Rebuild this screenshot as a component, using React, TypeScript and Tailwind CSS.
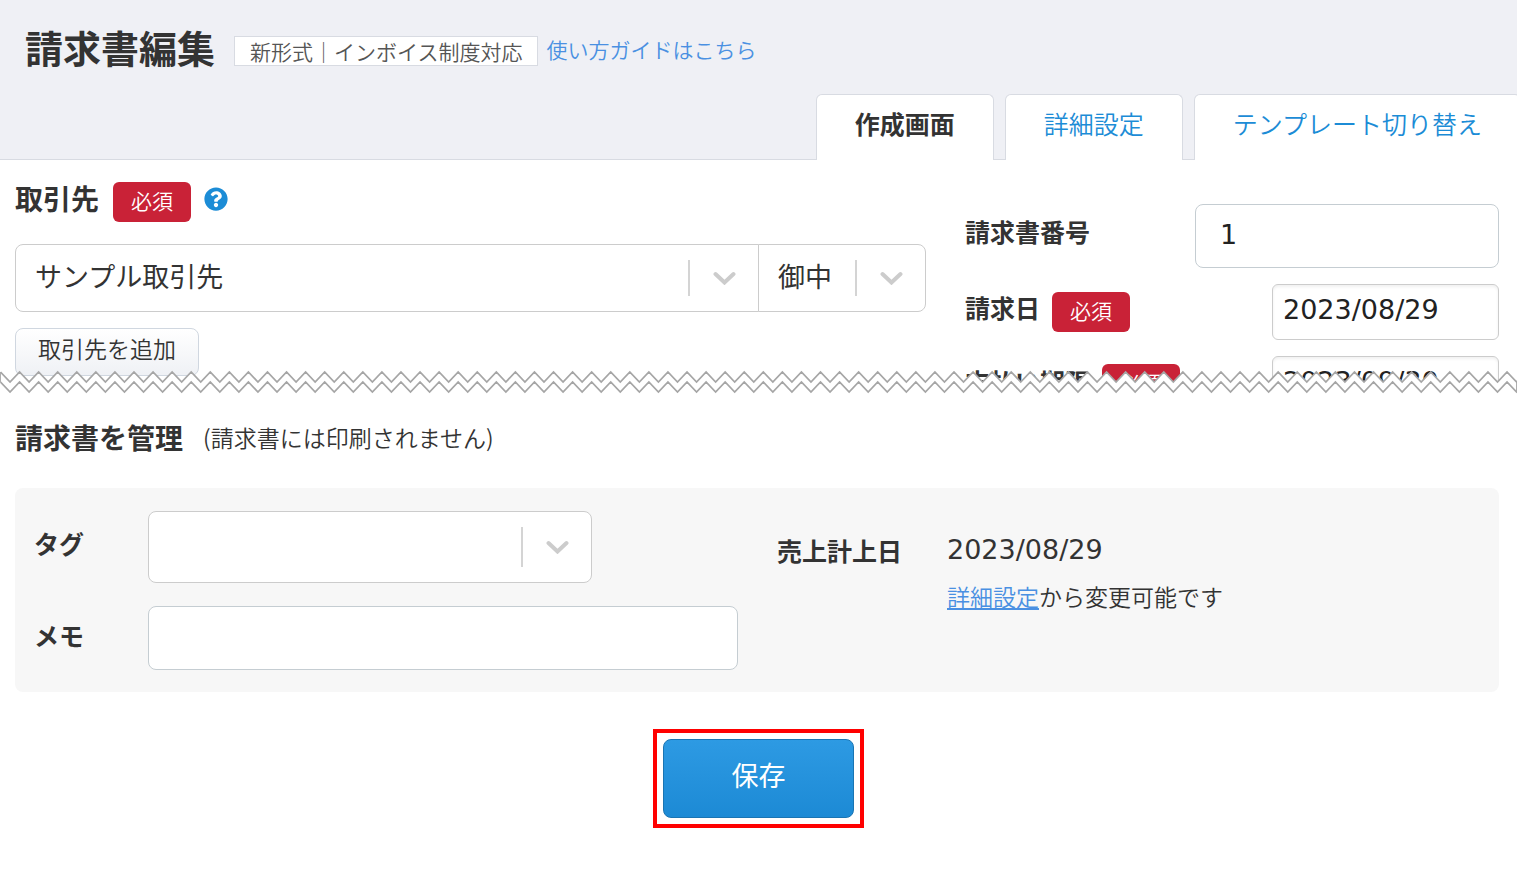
import React from "react";
import { FaQuestionCircle } from "react-icons/fa";

const TOOTH = 19.07;

const zigzag = (top: number, bottom: number) => {
  const points: string[] = [];
  for (let i = 0; i <= 300; i++) {
    points.push(`${(i * TOOTH) / 2 + 0.5},${i % 2 === 0 ? top : bottom}`);
  }
  return points;
};

const upper = zigzag(3, 13);
const lower = zigzag(13, 23);

const TornEdge = () => (
  <svg className="relative -mt-3 block h-[26px] w-full" aria-hidden="true">
    <polygon points={[...upper, ...[...lower].reverse()].join(" ")} fill="#fff" />
    <g fill="none" stroke="#a6a6a6" strokeWidth="1.8">
      <polyline points={upper.join(" ")} />
      <polyline points={lower.join(" ")} />
      <line x1="0" y1="3" x2="0" y2="13" />
      <line x1="100%" y1="13" x2="100%" y2="22" />
    </g>
  </svg>
);

const Required = () => (
  <span className="flex h-10 items-center rounded-md bg-[#c92237] px-[18px] pb-1 text-[21px] leading-none font-[350] text-white">
    必須
  </span>
);

type SelectBoxProps = {
  id: string;
  label?: string;
  options: string[];
  className: string;
  selectClassName: string;
};

const SelectBox = ({ id, label, options, className, selectClassName }: SelectBoxProps) => (
  <div className={`relative ${className}`}>
    <select
      id={id}
      aria-label={label}
      className={`w-full appearance-none border border-[#ccc] bg-white pr-[72px] pb-1 pl-[19px] text-[27px] text-[#333] ${selectClassName}`}
    >
      {options.map((option) => (
        <option key={option}>{option}</option>
      ))}
    </select>
    <div className="pointer-events-none absolute inset-y-4 right-0 flex w-[71px] items-center justify-center border-l-2 border-[#d4d4d4]">
      <svg width="24" height="14" viewBox="0 0 24 14" fill="none" stroke="#ccc" strokeWidth="4" strokeLinecap="round">
        <path d="M2.5 3 L11.5 11.5 L20.5 3" />
      </svg>
    </div>
  </div>
);

const tabClass =
  "flex h-[66px] shrink-0 items-center rounded-t-md border border-b-0 border-[#d8dbe2] bg-white px-[38px] pb-2 text-[25px] whitespace-nowrap";

const Header = () => (
  <header className="overflow-hidden bg-[#eff0f5]">
    <div className="flex items-center pt-6 pl-[25px]">
      <h1 className="pb-1 text-[38px] leading-[46px] font-bold">請求書編集</h1>
      <span className="mt-1 ml-[19px] border border-[#d8dbe2] bg-white px-[15px] text-[21px] leading-7 font-[350] text-[#555]">
        新形式｜インボイス制度対応
      </span>
      <a href="#guide" className="ml-2 text-[21px] leading-7 font-[350] text-[#4a90e2]">
        使い方ガイドはこちら
      </a>
    </div>
    <nav className="mt-5 flex justify-end">
      <div className="flex-1 border-b border-[#d8dbe2]" />
      <a href="#edit" className={`${tabClass} font-bold`}>作成画面</a>
      <div className="w-[11px] border-b border-[#d8dbe2]" />
      <a href="#detail" className={`${tabClass} font-[350] text-[#1c8cd6]`}>詳細設定</a>
      <div className="w-[11px] border-b border-[#d8dbe2]" />
      <a href="#template" className={`${tabClass} -mr-1 font-[350] text-[#1c8cd6]`}>テンプレート切り替え</a>
    </nav>
  </header>
);

const dateInput =
  "ml-auto h-14 w-[227px] rounded-md border border-[#ccc] bg-white px-2.5 pb-1.5 font-['DejaVu_Sans',sans-serif] text-[27px] text-[#222] shadow-[inset_0_2px_3px_rgba(0,0,0,0.06)]";

const InvoiceForm = () => (
  <section className="flex h-[221px] items-start gap-[39px] overflow-hidden pr-[18px] pl-[15px]">

    {/* Customer */}
    <div className="flex-1 pt-[22px]">
      <div className="flex h-10 items-center">
        <label htmlFor="client" className="mr-3.5 pb-2 text-[28px] leading-9 font-bold">取引先</label>
        <Required />
        <button type="button" aria-label="ヘルプ" className="ml-[13px] pb-1.5 text-[#1c8cd6]">
          <FaQuestionCircle size={24} />
        </button>
      </div>
      <div className="mt-[22px] flex">
        <SelectBox
          id="client"
          options={["サンプル取引先"]}
          className="flex-1"
          selectClassName="h-[68px] rounded-l-lg"
        />
        <SelectBox
          id="honorific"
          label="敬称"
          options={["御中", "様"]}
          className="-ml-px w-[168px]"
          selectClassName="h-[68px] rounded-r-lg"
        />
      </div>
      <button
        type="button"
        className="mt-4 h-12 rounded-lg border border-[#d0d7e0] bg-linear-to-b from-white to-[#eff1f5] px-[22px] pb-2 text-[23px] leading-none font-[350]"
      >
        取引先を追加
      </button>
    </div>

    {/* Invoice number and dates */}
    <div className="flex w-[534px] flex-col gap-4 pt-11">
      <div className="flex items-center">
        <label htmlFor="number" className="pb-2 text-[25px] font-bold">請求書番号</label>
        <input
          id="number"
          defaultValue="1"
          className="ml-auto h-16 w-[304px] rounded-lg border border-[#c5cdd2] bg-white px-6 pb-1 font-['DejaVu_Sans',sans-serif] text-[27px] text-[#222]"
        />
      </div>
      <div className="flex items-center">
        <label htmlFor="issued" className="mr-3 pb-2 text-[25px] font-bold">請求日</label>
        <Required />
        <input id="issued" defaultValue="2023/08/29" className={dateInput} />
      </div>
      <div className="flex items-center">
        <label htmlFor="due" className="mr-3 pb-1 text-[25px] font-bold">支払い期限</label>
        <Required />
        <input id="due" defaultValue="2023/09/30" className={dateInput} />
      </div>
    </div>
  </section>
);

const ManageSection = () => (
  <section className="pt-[22px] pr-[18px] pl-[15px]">
    <div className="flex items-center gap-5 leading-10">
      <h2 className="text-[28px] font-bold">請求書を管理</h2>
      <span className="text-[23px] font-[350]">(請求書には印刷されません)</span>
    </div>
    <div className="mt-[31px] flex items-start gap-[39px] rounded-lg bg-[#f7f7f7] px-[19px] pt-[23px] pb-[22px]">
      <div className="flex w-[704px] flex-col gap-[23px]">
        <div className="flex items-center">
          <label htmlFor="tag" className="w-[114px] pb-1.5 text-[25px] font-bold">タグ</label>
          <SelectBox id="tag" options={[""]} className="w-[444px]" selectClassName="h-[72px] rounded-lg" />
        </div>
        <div className="flex items-center">
          <label htmlFor="memo" className="w-[114px] pb-1 text-[25px] font-bold">メモ</label>
          <input
            id="memo"
            className="h-16 flex-1 rounded-lg border border-[#c5cdd2] bg-white px-6 text-[27px]"
          />
        </div>
      </div>
      <div className="flex gap-[45px] pt-4 leading-[46px]">
        <span className="text-[25px] font-bold">売上計上日</span>
        <div>
          <p className="font-['DejaVu_Sans',sans-serif] text-[27px] leading-[46px]">2023/08/29</p>
          <p className="text-[23px] font-[350]">
            <a href="#detail" className="text-[#4a90e2] underline">詳細設定</a>から変更可能です
          </p>
        </div>
      </div>
    </div>
  </section>
);

const App = () => {
  return (
    <div className="min-h-screen bg-white font-['Noto_Sans_CJK_JP',sans-serif] text-[#333]">
      <Header />
      <main>
        <InvoiceForm />
        <TornEdge />
        <ManageSection />
        <div className="mt-[37px] flex justify-center">
          <div className="border-4 border-[#ff0000] p-1.5">
            <button
              type="button"
              className="h-[79px] w-[191px] rounded-lg border border-[#1a75b3] bg-linear-to-b from-[#2d9ae3] to-[#1c8ad5] pb-1.5 text-[27px] text-white"
            >
              保存
            </button>
          </div>
        </div>
      </main>
    </div>
  );
};

export default App;
